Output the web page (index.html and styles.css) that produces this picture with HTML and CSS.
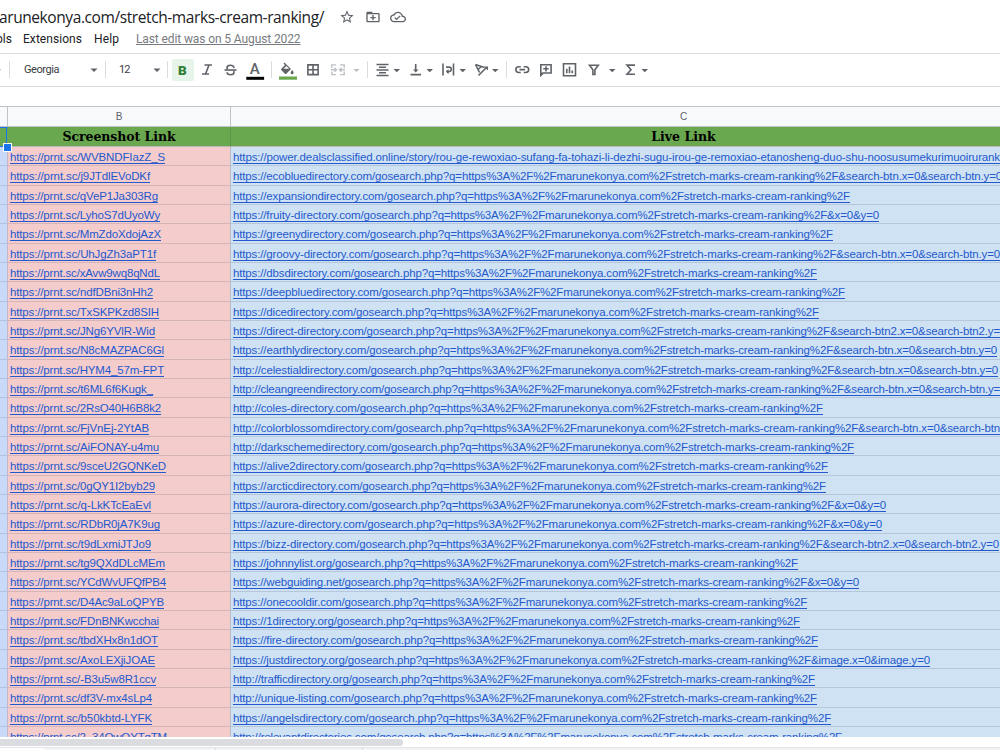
FILE: index.html
```html
<!DOCTYPE html>
<html lang="en">
<head>
<meta charset="utf-8">
<title>Link sheet</title>
<link rel="stylesheet" href="styles.css">
</head>
<body>
<header class="titlebar">
  <h1 class="doc-title" data-width="325">arunekonya.com/stretch-marks-cream-ranking/</h1>
  <svg class="t-icon" viewBox="0 0 24 24"><path d="M22 9.24l-7.19-.62L12 2 9.19 8.63 2 9.24l5.46 4.73L5.82 21 12 17.27 18.18 21l-1.63-7.03L22 9.24zM12 15.4l-3.76 2.27 1-4.28-3.32-2.88 4.38-.38L12 6.1l1.71 4.04 4.38.38-3.32 2.88 1 4.28L12 15.4z"/></svg>
  <svg class="t-icon" viewBox="0 0 24 24"><path d="M20 6h-8l-2-2H4c-1.1 0-2 .9-2 2v12c0 1.100.9 2 2 2h16c1.100 0 2-.9 2-2V8c0-1.100-.9-2-2-2zm0 12H4V8h16v10zM11 12H8v2h3v3h2v-3h3v-2h-3V9h-2z"/></svg>
  <svg class="t-icon" viewBox="0 0 24 24"><path d="M19.350 10.040C18.670 6.590 15.640 4 12 4 9.110 4 6.600 5.640 5.350 8.040 2.340 8.360 0 10.910 0 14c0 3.310 2.690 6 6 6h13c2.760 0 5-2.240 5-5 0-2.640-2.050-4.780-4.650-4.960zM19 18H6c-2.210 0-4-1.790-4-4 0-2.050 1.530-3.760 3.560-3.970l1.070-.11.5-.95C8.080 7.140 9.940 6 12 6c2.620 0 4.880 1.860 5.390 4.430l.3 1.500 1.530.11c1.560.1 2.780 1.410 2.780 2.960 0 1.650-1.350 3-3 3zm-9-3.820l-2.090-2.090L6.500 13.500 10 17l6.010-6.010-1.410-1.410z"/></svg>
</header>
<nav class="menubar">
  <span class="menu m-tools">ols</span>
  <span class="menu m-ext" data-width="59">Extensions</span>
  <span class="menu m-help" data-width="25">Help</span>
  <span class="last-edit" data-width="164.500">Last edit was on 5 August 2022</span>
</nav>
<div class="toolbar">
  <svg class="tools" viewBox="0 0 1000 47" width="1000" height="47">
    <g class="arrows">
      <path d="M-5 15.500h6l-3 3zM90.500 14.500h7l-3.500 3.500zM153.500 14.500h7l-3.500 3.500zM393.500 15h6.500l-3.250 3.250zM426.500 15h6.500l-3.250 3.250zM459.500 15h6.500l-3.250 3.250zM492 15h6.500l-3.250 3.250zM609 15h6.500l-3.250 3.250zM641.500 15h6.500l-3.250 3.250z"/>
      <path class="faded" d="M353.500 15h6l-3 3z"/>
    </g>
    <path class="seps" d="M9.500 7v17M105.500 7v17M167.500 7v17M271.500 7v17M367.500 7v17M506.500 7v17"/>
    <rect class="active" x="172" y="5" width="22" height="22" rx="2"/>
    <text class="glyph-b" x="178" y="20.500">B</text>
    <g class="stroke">
      <path d="M204.500 11h7.500M202 20h7M209 11l-3.500 9"/>
      <path d="M224.500 16h12"/>
      <path d="M234 14c-.1-1.700-1.500-2.800-3.500-2.800s-3.500.9-3.500 2.500c0 .7.300 1.200.8 1.600M227 18.300c.1 1.500 1.500 2.500 3.500 2.500s3.500-.9 3.500-2.500c0-.5-.2-1-.5-1.300"/>
      <path d="M307.900 10.900h10.200v9.700h-10.200zM307.900 15.700h10.200M313 10.900v9.700"/>
      <path d="M376.500 10.500h12M379 13.300h7M376.500 16h12M379 18.800h7M376.500 21.500h12"/>
      <path d="M410.500 20.600h10.500M415.700 10v6.500"/>
      <path d="M443 9.500v12M453.500 9.500v12M446 13.100h3a2.100 2.100 0 0 1 0 4.500h-1.500"/>
      <path d="M478.500 21.500l8-8M475.500 10.500l9 3M475.500 10.500l4 8M478 15.500l3.500-3"/>
      <path d="M520.800 12.700h-2.100a2.900 2.900 0 0 0 0 5.800h2.100M523.700 12.700h2.100a2.900 2.900 0 0 1 0 5.800h-2.100M519.500 15.600h5.500"/>
      <path d="M540.800 21v-10.300h10.300v8.300h-8.500zM543.300 14.800h5.400M546 12.200v5.200"/>
      <path d="M563.500 9.700h12v12h-12zM566.800 14.800v4.400M569.500 12.500v6.700M572.200 16.500v2.700"/>
      <path d="M589.500 11.200h8.800l-3.400 4.500v4.800h-2v-4.800z"/>
      <path d="M635 11.100h-8l4 4.600-4 4.600h8"/>
    </g>
    <path class="fill" d="M413 15.500h5.500l-2.750 3zM448.500 14.900v5.400l-2.700-2.700zM484 12.500h4v4zM540 20h3.500l-3.500 3z"/>
    <path class="fill" d="M284.500 8.500l6.500 6.500-4.700 4.700q-.7.500-1.400 0l-3.600-3.600q-.5-.7 0-1.400l3.700-3.700-1.500-1.500zM283.500 14.800h5.700l-2.800-2.700zM292.200 16q1.700 2 1.400 3-.5 1.200-1.500 1.200t-1.500-1.200q-.1-1 1.600-3z"/>
    <rect x="279" y="22.500" width="18" height="3.200" fill="#6aa84f"/>
    <text class="glyph-a" x="249.800" y="19.500">A</text>
    <rect x="246.300" y="22.800" width="17.800" height="3" fill="#000"/>
    <path class="merge" d="M336 10.900h-4.200v3M340 10.900h4.200v3M336 20.600h-4.200v-3M340 20.600h4.200v-3M331 15.700h5M345 15.700h-5M334.500 13.700l2 2-2 2M341.500 13.700l-2 2 2 2"/>
    <text class="label" x="24" y="19.200" textLength="35.500">Georgia</text>
    <text class="label" x="119" y="18.600" textLength="11.500">12</text>
  </svg>
</div>
<main class="sheet">
  <div class="row letters"><div></div><div>B</div><div>C</div></div>
  <div class="row heads"><div class="selected"></div><div><span data-width="113">Screenshot Link</span></div><div><span data-width="64.500">Live Link</span></div></div>
  <div id="rows"></div>
</main>
<div class="scroll"><div class="thumb"></div></div>
<footer class="tabs"><div class="tab-start"></div><div class="tab one"></div><div class="tab two"></div><div class="rest"></div></footer>
<script src="script.js"></script>
</body>
</html>
```
FILE: styles.css
```css
* { box-sizing: border-box; }
body { margin: 0; width: 1000px; height: 750px; overflow: hidden; display: flex; flex-direction: column; background: #fff; font-family: "Liberation Sans", Arial, sans-serif; }
.titlebar { height: 32px; flex: none; display: flex; align-items: center; padding-top: 1px; }
.doc-title { margin: 0 15px 0 -1px; width: 325px; flex: none; font: 400 15.500px/22px "Open Sans", sans-serif; color: #202124; white-space: nowrap; }
.t-icon { width: 16px; height: 16px; margin-right: 9.500px; fill: #5f6368; }
.menubar { height: 21px; flex: none; display: flex; align-items: center; font: 12px/16px Roboto, sans-serif; color: #202124; white-space: nowrap; padding-bottom: 7px; }
.m-tools { width: 27px; margin-left: -4px; }
.m-ext { width: 71px; }
.m-help { width: 42px; }
.last-edit { color: #777b80; text-decoration: underline; }
.toolbar { height: 34px; flex: none; border-top: 1px solid #dadce0; border-bottom: 1px solid #dadce0; overflow: hidden; margin-bottom: 19px; }
.tools { display: block; }
.arrows, .fill { fill: #5f6368; }
.faded { fill: #bcbec1; }
.seps { stroke: #dadce0; fill: none; }
.active { fill: #e6f4ea; }
.glyph-b { font: 900 13.500px Roboto, sans-serif; fill: #2e7d32; }
.glyph-a { font: 500 15px Roboto, sans-serif; fill: #5f6368; }
.stroke { fill: none; stroke: #5f6368; stroke-width: 1.600; }
.merge { fill: none; stroke: #bdc1c6; stroke-width: 1.400; }
.label { font: 11px Roboto, sans-serif; fill: #3c4043; }
.sheet { height: 631px; flex: none; overflow: hidden; }
.row { display: grid; grid-template-columns: 8px 223px 769px; grid-template-rows: 100%; height: 19.340px; white-space: nowrap; }
.row > div { min-height: 0; border-right: 1px solid #b9b9bd; border-bottom: 1px solid #b9b9bd; }
.row > div:last-child { border-right: 0; }
.letters { height: 21px; border-top: 1px solid #c0c4c8; }
.letters > div { background: #f8f9fa; text-align: center; font-size: 10px; line-height: 19px; color: #5f6368; border-color: #c0c4c8; }
.heads { height: 20px; }
.heads > div { background: #6aa84f; text-align: center; font: 700 12.500px/20px "DejaVu Serif", serif; color: #000; border-right-color: #62964b; }
.letters > div:last-child, .heads > div:last-child { padding-left: 136px; }
.heads .selected { border-right: 1px solid #6aa84f; border-top: 1px solid #1a73e8; border-bottom: 1px solid #1a73e8; position: relative; box-shadow: inset -1px 0 #1a73e8; }
.selected::after { content: ""; position: absolute; left: 3px; top: 15px; width: 7px; height: 7px; background: #1a73e8; border: 1px solid #fff; }
.data { font-size: 11.500px; line-height: 21px; color: #1155cc; }
.data a { color: #2459cd; text-decoration: underline; text-underline-offset: 1.500px; text-decoration-thickness: 1px; text-decoration-skip-ink: none; }
.data > div:nth-child(1) { background: #c9daf8; border-right-color: #c2b6c8; border-bottom-color: #b3c1dc; }
.data > div:nth-child(2) { background: #f4cccc; padding-left: 2px; border-right-color: #b6bcc8; border-bottom-color: #d6b5b8; }
.data > div:nth-child(3) { background: #cfe2f3; padding-left: 2px; border-bottom-color: #b5c7d8; }
.scroll { height: 10px; flex: none; padding-top: 2px; background: #fff; }
.thumb { width: 403px; height: 7px; background: #dadce0; border-radius: 0 4px 4px 0; }
.tabs { flex: 1; display: grid; grid-template-columns: 44px 172px 147px 1fr; background: #f1f3f4; border-top: 1px solid #e3e5e8; }
.tab-start { background: #fff; }
.tab { border-right: 1px solid #dadce0; }
```
FILE: script.js
```js
const mid = "/gosearch.php?q=https%3A%2F%2Fmarunekonya.com%2Fstretch-marks-cream-ranking%2F";
const btn = "&search-btn.x=0&search-btn.y=0";
const btn2 = "&search-btn2.x=0&search-btn2.y=0";
const xy = "&x=0&y=0";

// short code, its width, site, query suffix, width of the live link
const rows = [
  ["WVBNDFIazZ_S", 155, "", "", 767],
  ["j9JTdlEVoDKf", 140, "https://ecobluedirectory.com", btn, 769],
  ["qVeP1Ja303Rg", 148, "https://expansiondirectory.com", "", 617],
  ["LyhoS7dUyoWy", 150, "https://fruity-directory.com", xy, 646],
  ["MmZdoXdojAzX", 151, "https://greenydirectory.com", "", 600],
  ["UhJgZh3aPT1f", 146, "https://groovy-directory.com", btn, 767],
  ["xAvw9wq8qNdL", 150, "https://dbsdirectory.com", "", 584],
  ["ndfDBni3nHh2", 143, "https://deepbluedirectory.com", "", 612],
  ["TxSKPKzd8SIH", 149, "https://dicedirectory.com", "", 586],
  ["JNg6YVlR-Wid", 145, "https://direct-directory.com", btn2.slice(0, -1), 767],
  ["N8cMAZPAC6Gl", 154, "https://earthlydirectory.com", btn, 764],
  ["HYM4_57m-FPT", 154, "http://celestialdirectory.com", btn, 765],
  ["t6ML6f6Kugk_", 143, "http://cleangreendirectory.com", btn.slice(0, -1), 767],
  ["2RsO40H6B8k2", 151, "http://coles-directory.com", "", 590],
  ["FjVnEj-2YtAB", 139, "http://colorblossomdirectory.com", "&search-btn.x=0&search-btn", 767],
  ["AiFONAY-u4mu", 149, "http://darkschemedirectory.com", "", 621],
  ["9sceU2GQNKeD", 156, "https://alive2directory.com", "", 595],
  ["0gQY1I2byb29", 145, "https://arcticdirectory.com", "", 593],
  ["q-LkKTcEaEvl", 141, "https://aurora-directory.com", xy, 653],
  ["RDbR0jA7K9ug", 150, "https://azure-directory.com", xy, 649],
  ["t9dLxmiJTJo9", 141, "https://bizz-directory.com", btn2, 766],
  ["tg9QXdDLcMEm", 155, "https://johnnylist.org", "", 565],
  ["YCdWvUFQfPB4", 156, "https://webguiding.net", xy, 626],
  ["D4Ac9aLoQPYB", 154, "https://onecooldir.com", "", 574],
  ["FDnBNKwcchai", 149, "https://1directory.org", "", 567],
  ["tbdXHx8n1dOT", 148, "https://fire-directory.com", "", 585],
  ["AxoLEXjiJOAE", 145, "https://justdirectory.org", "&image.x=0&image.y=0", 697],
  ["-B3u5w8R1ccv", 146, "http://trafficdirectory.org", "", 582],
  ["df3V-mx4sLp4", 142, "http://unique-listing.com", "", 584],
  ["b50kbtd-LYFK", 142, "https://angelsdirectory.com", "", 598],
  ["2_34OwOYTgTM", 157, "http://relevantdirectories.com", "", 609]
];
const story = "https://power.dealsclassified.online/story/rou-ge-rewoxiao-sufang-fa-tohazi-li-dezhi-sugu-irou-ge-remoxiao-etanosheng-duo-shu-noosusumekurimuoirurank";

function link(text, width) {
  const cell = document.createElement("div");
  const a = document.createElement("a");
  a.textContent = text;
  a.dataset.width = width;
  cell.append(a);
  return cell;
}

const holder = document.getElementById("rows");
for (const [code, w, site, suffix, liveWidth] of rows) {
  const row = document.createElement("div");
  row.className = "row data";
  row.append(
    document.createElement("div"),
    link("https://prnt.sc/" + code, w),
    link(site ? site + mid + suffix : story, liveWidth)
  );
  holder.append(row);
}

for (const el of document.querySelectorAll("[data-width]")) {
  const range = document.createRange();
  range.selectNodeContents(el);
  const natural = range.getBoundingClientRect().width;
  el.style.letterSpacing = (el.dataset.width - natural) / el.textContent.length + "px";
}
```
